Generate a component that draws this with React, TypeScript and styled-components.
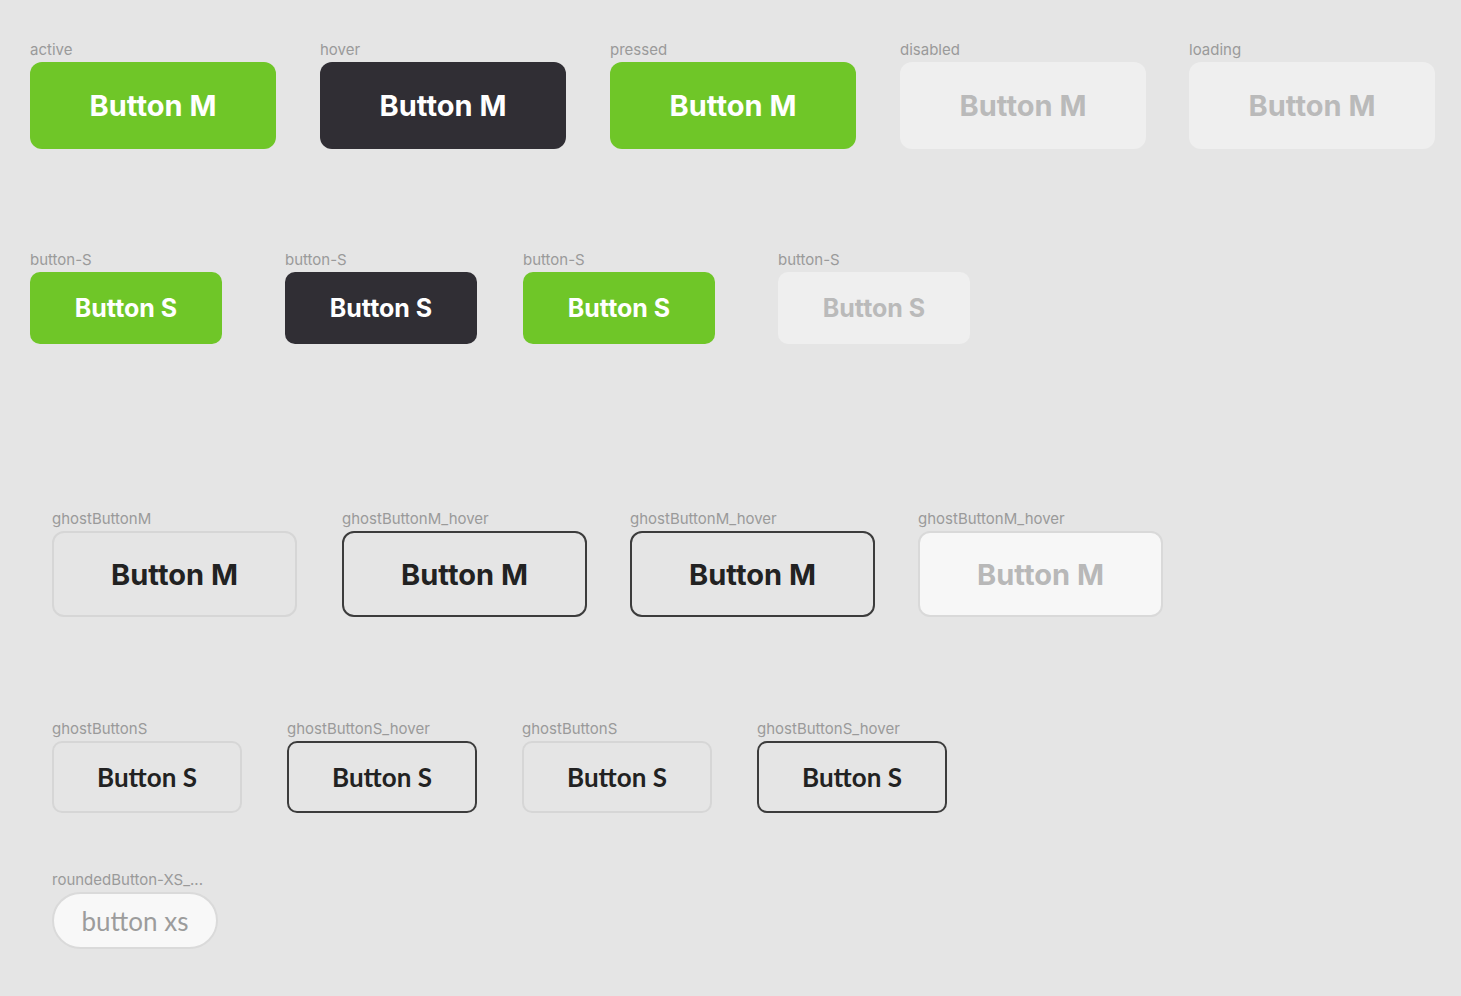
import React from "react";
import styled, { createGlobalStyle, css } from "styled-components";

const Global = createGlobalStyle`
  html, body { margin: 0; padding: 0; background: #e5e5e5; }
  body { font-family: Inter, "Noto Sans", sans-serif; }
`;

const Page = styled.div`
  width: 1461px;
  height: 996px;
  box-sizing: border-box;
  background: #e5e5e5;
  padding-top: 41px;
  display: flex;
  flex-direction: column;
  overflow: hidden;
`;

const Row = styled.div<{ $cols: string; $left: number; $top: number }>`
  display: grid;
  grid-template-columns: ${(p) => p.$cols};
  padding-left: ${(p) => p.$left}px;
  margin-top: ${(p) => p.$top}px;
  align-items: start;
`;

const Item = styled.div`
  display: flex;
  flex-direction: column;
  align-items: flex-start;
  gap: 3px;
`;

const Label = styled.div`
  font-family: Inter, sans-serif;
  font-size: 15px;
  line-height: 18px;
  color: #9a9a9a;
  white-space: nowrap;
`;

type Variant = "green" | "dark" | "disabled";

const Solid = styled.div<{ $variant: Variant; $size: "M" | "S" }>`
  box-sizing: border-box;
  display: flex;
  align-items: center;
  justify-content: center;
  font-family: Inter, sans-serif;
  font-weight: 700;
  ${(p) =>
    p.$size === "M"
      ? css`
          width: 246px;
          height: 87px;
          border-radius: 12px;
          font-size: 29px;
        `
      : css`
          width: 192px;
          height: 72px;
          border-radius: 10px;
          font-size: 25px;
        `}
  ${(p) =>
    p.$variant === "green"
      ? css`
          background: #6fc628;
          color: #ffffff;
        `
      : p.$variant === "dark"
      ? css`
          background: #302e34;
          color: #ffffff;
        `
      : css`
          background: #efefef;
          color: #bababa;
        `}
`;

type Ghost = "idle" | "hover" | "faded";

const GhostBtn = styled.div<{ $state: Ghost; $size: "M" | "S" }>`
  box-sizing: border-box;
  display: flex;
  align-items: center;
  justify-content: center;
  ${(p) =>
    p.$size === "M"
      ? css`
          width: 245px;
          height: 86px;
          border-radius: 12px;
          font-family: Inter, sans-serif;
          font-weight: 700;
          font-size: 29px;
        `
      : css`
          width: 190px;
          height: 72px;
          border-radius: 10px;
          font-family: Lato, sans-serif;
          font-weight: 700;
          font-size: 26px;
        `}
  ${(p) =>
    p.$state === "idle"
      ? css`
          border: 2px solid #d6d6d6;
          color: #222222;
          background: transparent;
        `
      : p.$state === "hover"
      ? css`
          border: 2px solid #3c3c3c;
          color: #222222;
          background: transparent;
        `
      : css`
          border: 2px solid #d9d9d9;
          color: #b8b8b8;
          background: #f7f7f7;
        `}
`;

const Pill = styled.div`
  box-sizing: border-box;
  width: 166px;
  height: 57px;
  border-radius: 29px;
  border: 2px solid #dadada;
  background: #f8f8f8;
  display: flex;
  align-items: center;
  justify-content: center;
  font-family: Lato, sans-serif;
  font-size: 26px;
  color: #9c9c9c;
`;

export default function App() {
  return (
    <>
      <Global />
      <Page>
        <Row $cols="290px 290px 290px 289px 246px" $left={30} $top={0}>
          {[
            ["active", "green"],
            ["hover", "dark"],
            ["pressed", "green"],
            ["disabled", "disabled"],
            ["loading", "disabled"],
          ].map(([l, v]) => (
            <Item key={l}>
              <Label>{l}</Label>
              <Solid $variant={v as Variant} $size="M">
                Button M
              </Solid>
            </Item>
          ))}
        </Row>
        <Row $cols="255px 238px 255px 192px" $left={30} $top={102}>
          {(["green", "dark", "green", "disabled"] as Variant[]).map((v, i) => (
            <Item key={i}>
              <Label>button-S</Label>
              <Solid $variant={v} $size="S">
                Button S
              </Solid>
            </Item>
          ))}
        </Row>
        <Row $cols="290px 288px 288px 245px" $left={52} $top={166}>
          {[
            ["ghostButtonM", "idle"],
            ["ghostButtonM_hover", "hover"],
            ["ghostButtonM_hover", "hover"],
            ["ghostButtonM_hover", "faded"],
          ].map(([l, s], i) => (
            <Item key={i}>
              <Label>{l}</Label>
              <GhostBtn $state={s as Ghost} $size="M">
                Button M
              </GhostBtn>
            </Item>
          ))}
        </Row>
        <Row $cols="235px 235px 235px 190px" $left={52} $top={103}>
          {[
            ["ghostButtonS", "idle"],
            ["ghostButtonS_hover", "hover"],
            ["ghostButtonS", "idle"],
            ["ghostButtonS_hover", "hover"],
          ].map(([l, s], i) => (
            <Item key={i}>
              <Label>{l}</Label>
              <GhostBtn $state={s as Ghost} $size="S">
                Button S
              </GhostBtn>
            </Item>
          ))}
        </Row>
        <Row $cols="166px" $left={52} $top={58}>
          <Item>
            <Label>roundedButton-XS_...</Label>
            <Pill>button xs</Pill>
          </Item>
        </Row>
      </Page>
    </>
  );
}
